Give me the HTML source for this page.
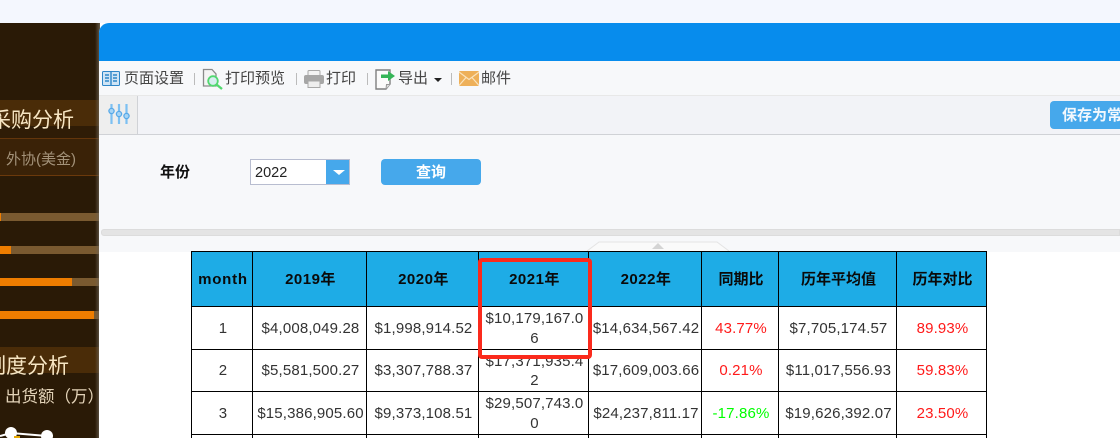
<!DOCTYPE html>
<html lang="zh">
<head>
<meta charset="utf-8">
<style>
html,body{margin:0;padding:0;width:1120px;height:438px;overflow:hidden;background:#fff}
body{position:relative;font-family:"Liberation Sans","Noto Sans CJK SC",sans-serif;color:#333}
div,span,svg{position:absolute;box-sizing:border-box}
.t{white-space:nowrap;line-height:20px}
.tb{font-size:15px;color:#444;top:69px;height:20px}
.sep{width:1px;height:12px;top:73px;background:#bbb}
.bar{left:0;height:8px;background:#7a5a30;width:99px}
.bar span{left:0;top:0;height:8px;background:#ee7d00;display:block}
.v{background:#000;width:1px;top:251px;height:187px}
.h{background:#000;height:1px;left:191px;width:796px}
.c{white-space:nowrap;text-align:center;font-size:15px;letter-spacing:.15px;line-height:20px;color:#333;margin-left:1px}
.hd{font-weight:bold;color:#0a0a0a;top:270px;letter-spacing:.5px}
.r{color:#ff1a1a}.g{color:#0f0}
</style>
</head>
<body>
<div style="left:0;top:0;width:1120px;height:23px;background:#f4f7fe"></div>

<!-- left dark panel -->
<div style="left:0;top:23px;width:100px;height:415px;background:#2a1a06"></div>
<div style="left:0;top:100px;width:100px;height:26px;background:#4a2c08"></div>
<div style="left:0;top:126px;width:100px;height:12px;background:#2f1c06"></div>
<div style="left:0;top:138px;width:100px;height:38px;background:#3a2207;border-top:1px solid #63350b;border-bottom:1px solid #6b390b"></div>
<div class="t" style="left:-10px;top:109px;font-size:21px;line-height:24px;color:#f7e6c4">采购分析</div>
<div class="t" style="left:6px;top:150px;font-size:15px;color:#a39279">外协(美金)</div>

<div class="bar" style="top:213px"><span style="width:1px"></span></div>
<div class="bar" style="top:246px"><span style="width:11px"></span></div>
<div class="bar" style="top:278px"><span style="width:72px"></span></div>
<div class="bar" style="top:311px"><span style="width:94px"></span></div>

<div style="left:0;top:347px;width:100px;height:26px;background:#4a2c08"></div>
<div class="t" style="left:-15px;top:355px;font-size:21px;line-height:24px;color:#f7e6c4">制度分析</div>
<div class="t" style="left:5px;top:387px;font-size:16.5px;color:#e3d3b8">出货额（万）</div>
<svg style="left:0;top:425px" width="100" height="13" viewBox="0 0 100 13">
<path d="M0 11 L11 8 L47 11" stroke="#fff" stroke-width="2" fill="none"/>
<circle cx="11" cy="8" r="6" fill="#fff"/><circle cx="47" cy="11" r="6" fill="#fff"/>
<rect x="14" y="11" width="6" height="2" fill="#e6a800"/>
</svg>
<div style="left:95px;top:23px;width:5px;height:415px;background:linear-gradient(90deg,rgba(60,45,25,0),rgba(110,100,85,.85))"></div>

<!-- window -->
<div style="left:99px;top:23px;width:1021px;height:415px;background:#fff;border-top-left-radius:10px;overflow:hidden">
  <div style="left:0;top:0;width:1021px;height:38px;background:#078ced"></div>
  <div style="left:0;top:38px;width:1021px;height:191px;background:#f7f8fa"></div>
  <div style="left:0;top:72px;width:1021px;height:40px;background:#f2f3f7;border-top:1px solid #e8e8e8;border-bottom:1px solid #d0d2d6"></div>
  <div style="left:0;top:73px;width:39px;height:38px;background:#eeeeee;border-right:1px solid #d0d2d6"></div>
  <div style="left:0;top:213px;width:1021px;height:15px;background:#f7f8fa"></div>
  <div style="left:2px;top:206px;width:1019px;height:7px;background:#e4e4e4;border:1px solid #dcdcdc;border-radius:3px 0 0 3px"></div>
</div>

<!-- toolbar icons and labels -->
<svg style="left:102px;top:71px" width="18" height="15" viewBox="0 0 18 15">
<rect x=".5" y=".5" width="17" height="14" rx="1" fill="#cfe4f5" stroke="#2f86c8"/>
<rect x="8.3" y="1" width="1.4" height="13" fill="#2f86c8"/>
<path d="M3 4h4M3 7h4M3 10h4M11 4h4M11 7h4M11 10h4" stroke="#2f86c8" stroke-width="1.6"/>
</svg>
<div class="t tb" style="left:124px">页面设置</div>
<div class="sep" style="left:194px"></div>
<svg style="left:202px;top:68px" width="22" height="22" viewBox="0 0 22 22">
<path d="M1.500 1.500H10L14 6V18H1.500Z" fill="#f4f4f4" stroke="#8a8a8a" stroke-width="1.300"/>
<circle cx="11" cy="13" r="4.800" fill="#d6eef0" stroke="#52d870" stroke-width="1.800"/>
<path d="M14.500 16.500L20 21" stroke="#52d870" stroke-width="2.400"/>
</svg>
<div class="t tb" style="left:225px">打印预览</div>
<div class="sep" style="left:296px"></div>
<svg style="left:304px;top:70px" width="20" height="18" viewBox="0 0 20 18">
<rect x="4" y=".5" width="12" height="6" rx="1" fill="#f2f2f2" stroke="#a8a8a8"/>
<rect x="0" y="5" width="20" height="9" rx="2" fill="#a6a6a6"/>
<rect x="4" y="11" width="12" height="6.500" fill="#eee" stroke="#a8a8a8"/>
</svg>
<div class="t tb" style="left:326px">打印</div>
<div class="sep" style="left:367px"></div>
<svg style="left:375px;top:68px" width="20" height="22" viewBox="0 0 20 22">
<path d="M1 2H15V16L11 21H1Z" fill="#fbfbfb" stroke="#7f7f7f" stroke-width="1.400"/>
<path d="M11 21L11.500 16.500H15" fill="#ddd" stroke="#999"/>
<path d="M6 6.500H13V3L20 8L13 13V10H6Z" fill="#35b558"/>
</svg>
<div class="t tb" style="left:398px">导出</div>
<div style="left:434px;top:78px;width:0;height:0;border-left:4px solid transparent;border-right:4px solid transparent;border-top:4px solid #222"></div>
<div class="sep" style="left:451px"></div>
<svg style="left:459px;top:71px" width="20" height="15" viewBox="0 0 20 15">
<rect width="20" height="15" rx="1" fill="#eeb059"/>
<path d="M0 1L10 8.500L20 1M0 14.500L7 6.500M20 14.500L13 6.500" stroke="#fae3bd" stroke-width="1.200" fill="none"/>
</svg>
<div class="t tb" style="left:481px">邮件</div>

<!-- slider icon -->
<svg style="left:108px;top:104px" width="22" height="21" viewBox="0 0 22 21">
<path d="M3.500 0V20M11 0V20M18.500 0V20" stroke="#7cc0f2" stroke-width="2.200"/>
<circle cx="3.500" cy="7" r="2.600" fill="#a8d5f5" stroke="#58a9e8" stroke-width="1.300"/>
<circle cx="11" cy="10" r="2.600" fill="#a8d5f5" stroke="#58a9e8" stroke-width="1.300"/>
<circle cx="18.500" cy="12" r="2.600" fill="#a8d5f5" stroke="#58a9e8" stroke-width="1.300"/>
</svg>

<!-- save button -->
<div style="left:1050px;top:101px;width:80px;height:28px;background:#46a8eb;border-radius:4px"></div>
<div class="t" style="left:1062px;top:106px;font-size:15px;font-weight:bold;color:#f2f8fd">保存为常用</div>

<!-- filter row -->
<div class="t" style="left:160px;top:163px;font-size:15px;font-weight:bold;color:#111">年份</div>
<div style="left:250px;top:159px;width:100px;height:26px;background:#fff;border:1px solid #b8bdd0"></div>
<div class="t" style="left:255px;top:163px;font-size:14.5px;color:#222">2022</div>
<div style="left:326px;top:160px;width:23px;height:24px;background:#46a8eb"></div>
<div style="left:333px;top:170px;width:0;height:0;border-left:6px solid transparent;border-right:6px solid transparent;border-top:5px solid #fff"></div>
<div style="left:381px;top:159px;width:100px;height:26px;background:#46a8eb;border-radius:4px"></div>
<div class="t" style="left:381px;top:163px;width:100px;text-align:center;font-size:15px;font-weight:bold;color:#fff">查询</div>

<!-- collapse handle -->
<svg style="left:585px;top:240px" width="146" height="11" viewBox="0 0 146 11">
<path d="M2 11L14 2H132L144 11" fill="#fafafa" stroke="#e4e4e4"/>
<path d="M67 9L73 3L79 9Z" fill="#d4d4d4"/>
</svg>

<!-- table -->
<div style="left:191px;top:251px;width:796px;height:56px;background:#1eace6"></div>
<div class="h" style="top:251px"></div><div class="h" style="top:306px"></div><div class="h" style="top:349px"></div><div class="h" style="top:391px"></div><div class="h" style="top:434px"></div>
<div class="v" style="left:191px"></div><div class="v" style="left:252px"></div><div class="v" style="left:366px"></div><div class="v" style="left:478px"></div><div class="v" style="left:588px"></div><div class="v" style="left:701px"></div><div class="v" style="left:778px"></div><div class="v" style="left:896px"></div><div class="v" style="left:986px"></div>

<div class="c hd" style="left:192px;width:60px;letter-spacing:.8px">month</div>
<div class="c hd" style="left:253px;width:113px">2019年</div>
<div class="c hd" style="left:367px;width:111px">2020年</div>
<div class="c hd" style="left:479px;width:109px">2021年</div>
<div class="c hd" style="left:589px;width:112px">2022年</div>
<div class="c hd" style="left:702px;width:76px;letter-spacing:0">同期比</div>
<div class="c hd" style="left:779px;width:117px;letter-spacing:0">历年平均值</div>
<div class="c hd" style="left:897px;width:89px;letter-spacing:0">历年对比</div>

<div class="c" style="left:192px;width:60px;top:319px">1</div>
<div class="c" style="left:253px;width:113px;top:319px">$4,008,049.28</div>
<div class="c" style="left:367px;width:111px;top:319px">$1,998,914.52</div>
<div class="c" style="left:479px;width:109px;top:309px">$10,179,167.0</div>
<div class="c" style="left:479px;width:109px;top:329px">6</div>
<div class="c" style="left:589px;width:112px;top:319px">$14,634,567.42</div>
<div class="c r" style="left:702px;width:76px;top:319px">43.77%</div>
<div class="c" style="left:779px;width:117px;top:319px">$7,705,174.57</div>
<div class="c r" style="left:897px;width:89px;top:319px">89.93%</div>

<div class="c" style="left:192px;width:60px;top:361px">2</div>
<div class="c" style="left:253px;width:113px;top:361px">$5,581,500.27</div>
<div class="c" style="left:367px;width:111px;top:361px">$3,307,788.37</div>
<div class="c" style="left:479px;width:109px;top:352px">$17,371,935.4</div>
<div class="c" style="left:479px;width:109px;top:371px">2</div>
<div class="c" style="left:589px;width:112px;top:361px">$17,609,003.66</div>
<div class="c r" style="left:702px;width:76px;top:361px">0.21%</div>
<div class="c" style="left:779px;width:117px;top:361px">$11,017,556.93</div>
<div class="c r" style="left:897px;width:89px;top:361px">59.83%</div>

<div class="c" style="left:192px;width:60px;top:404px">3</div>
<div class="c" style="left:253px;width:113px;top:404px">$15,386,905.60</div>
<div class="c" style="left:367px;width:111px;top:404px">$9,373,108.51</div>
<div class="c" style="left:479px;width:109px;top:394px">$29,507,743.0</div>
<div class="c" style="left:479px;width:109px;top:414px">0</div>
<div class="c" style="left:589px;width:112px;top:404px">$24,237,811.17</div>
<div class="c g" style="left:702px;width:76px;top:404px">-17.86%</div>
<div class="c" style="left:779px;width:117px;top:404px">$19,626,392.07</div>
<div class="c r" style="left:897px;width:89px;top:404px">23.50%</div>

<!-- red highlight -->
<div style="left:478px;top:258px;width:114px;height:101px;border:4px solid #fb2a1c;border-radius:4px"></div>
</body>
</html>
